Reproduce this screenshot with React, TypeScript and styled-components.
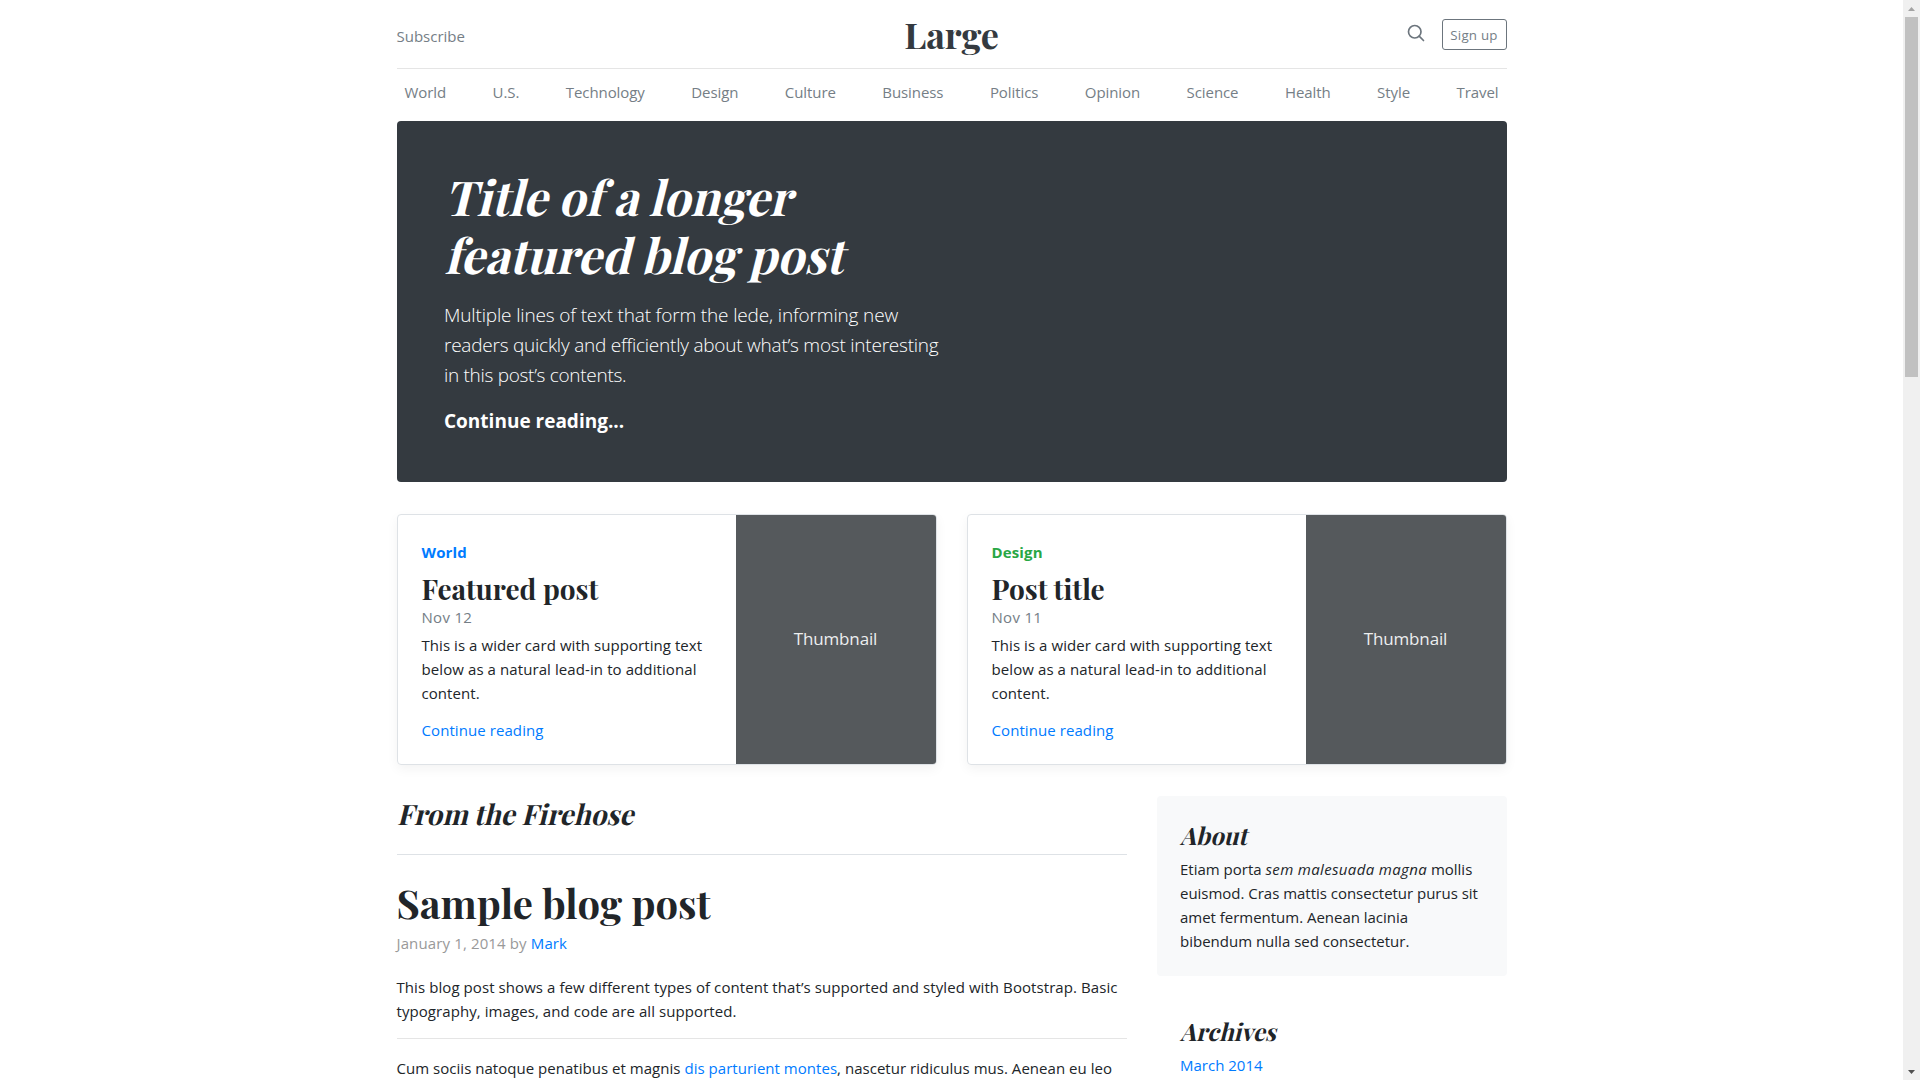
import React from "react";
import styled, { createGlobalStyle } from "styled-components";

const serif = `"Playfair Display", "Liberation Serif", Georgia, serif`;
const sans = `"Open Sans", "Noto Sans", sans-serif`;
const muted = "#757e86";

const GlobalStyle = createGlobalStyle`
  *, *::before, *::after { box-sizing: border-box; }
  html, body { margin: 0; padding: 0; background: #fff; overflow: hidden; }
  body { font: 400 15px/24px ${sans}; color: #212529; }
  h1, h2, h3, h4, p { margin: 0; }
`;

const Window = styled.div`
  display: flex;
  width: 1920px;
  height: 1080px;
  overflow: hidden;
`;

const Viewport = styled.div`
  flex: 1;
  height: 100%;
  overflow: hidden;
`;

const Container = styled.div`
  width: 1110px;
  margin: 0 auto;
`;

const Link = styled.a`
  color: #007bff;
  text-decoration: none;
`;

/* White-space is kept on one line so that copy breaks where it is authored. */
const Line = styled.span<{ $spacing?: number }>`
  display: block;
  white-space: nowrap;
  letter-spacing: ${(p) => p.$spacing ?? 0}px;
`;

/* Slants the upright serif around its baseline (line-height 1.2). */
const Oblique = styled.span`
  display: block;
  width: max-content;
  white-space: nowrap;
  transform: skewX(-14deg);
  transform-origin: 0 1.0155em;
`;

/* ---------- header ---------- */

const Header = styled.header`
  display: grid;
  grid-template-columns: 1fr auto 1fr;
  align-items: start;
  height: 69px;
  border-bottom: 1px solid #e5e5e5;
`;

const Subscribe = styled.a`
  margin-top: 24px;
  color: ${muted};
`;

const Brand = styled.a`
  margin-top: 12px;
  font: 700 36px/44px ${serif};
  letter-spacing: -0.1px;
  color: #343a40;
`;

const HeaderActions = styled.div`
  display: flex;
  justify-content: flex-end;
  gap: 16px;
  padding-top: 19px;
`;

const SearchIcon = styled.svg`
  width: 20px;
  height: 20px;
  margin-top: 4px;
  fill: none;
  stroke: #6c757d;
  stroke-width: 2;
  stroke-linecap: round;
  stroke-linejoin: round;
`;

const SignUp = styled.button`
  width: 65px;
  height: 31px;
  padding: 0;
  border: 1px solid #6c757d;
  border-radius: 3px;
  background: transparent;
  font: 400 13.3px/20px ${sans};
  letter-spacing: 0.25px;
  color: ${muted};
`;

const Nav = styled.nav`
  display: flex;
  justify-content: space-between;
  height: 52px;
  padding: 11px 0 0;
`;

const NavItem = styled.a`
  padding: 0 8px;
  letter-spacing: -0.08px;
  color: ${muted};
`;

/* ---------- featured ---------- */

const Jumbotron = styled.section`
  height: 361px;
  padding: 47px 48px 0 47.5px;
  border-radius: 4px;
  background: #343a40;
  color: #fff;
`;

const JumboTitle = styled.h1`
  font: 700 48px/1.2 ${serif};
`;

const Lead = styled.p`
  margin-top: 17px;
  font: 300 19px/30px ${sans};
`;

const LeadLink = styled.a`
  display: block;
  margin-top: 16px;
  font: 700 19px/30px ${sans};
  color: #fff;
`;

const Cards = styled.section`
  display: grid;
  grid-template-columns: 1fr 1fr;
  gap: 30px;
  margin-top: 32px;
`;

const Card = styled.article`
  display: flex;
  height: 251px;
  border: 1px solid #dee2e6;
  border-radius: 4px;
  overflow: hidden;
  box-shadow: 0 4px 12px rgba(0, 0, 0, 0.05);
`;

const CardBody = styled.div`
  flex: 1;
  padding: 25px 0 0 24px;
`;

const Category = styled.strong<{ $color: string }>`
  display: block;
  letter-spacing: 0.15px;
  color: ${(p) => p.$color};
`;

const CardTitle = styled.h3`
  margin: 8px 0 -1px;
  font: 700 28px/34px ${serif};
`;

const CardDate = styled.div`
  letter-spacing: 0.3px;
  color: ${muted};
`;

const CardText = styled.p`
  margin-top: 4px;
`;

const CardLink = styled(Link)`
  display: block;
  margin-top: 13px;
  letter-spacing: 0.08px;
`;

const Thumbnail = styled.div`
  display: flex;
  align-items: center;
  justify-content: center;
  width: 200px;
  padding-bottom: 1px;
  background: #55595c;
  color: #eceeef;
  font: 400 17px/24px ${sans};
  letter-spacing: -0.15px;
`;

/* ---------- content ---------- */

const Content = styled.div`
  display: grid;
  grid-template-columns: 730px 350px;
  gap: 30px;
  margin-top: 31px;
`;

const SectionTitle = styled.h3`
  height: 59px;
  padding-top: 1px;
  border-bottom: 1px solid #dee2e6;
  font: 700 28px/1.2 ${serif};
`;

const PostTitle = styled.h2`
  margin-top: 24px;
  font: 700 40px/48px ${serif};
`;

const PostMeta = styled.p`
  margin: 4px 0 20px;
  letter-spacing: 0.13px;
  color: #999;
`;

const Rule = styled.hr`
  margin: 15px 0 17px;
  border: 0;
  border-top: 1px solid #e5e5e5;
`;

const Widget = styled.section<{ $filled?: boolean }>`
  height: 180px;
  margin-bottom: 16px;
  padding: 25px 24px 0 23.5px;
  border-radius: 4px;
  background: ${(p) => (p.$filled ? "#f8f9fa" : "transparent")};
`;

const WidgetTitle = styled.h4`
  height: 36px;
  font: 700 24px/1.2 ${serif};
`;

const Emphasis = styled.em`
  letter-spacing: 0.35px;
`;

/* ---------- scrollbar ---------- */

const Scrollbar = styled.div`
  display: flex;
  flex-direction: column;
  align-items: center;
  width: 17px;
  height: 100%;
  background: #f0f0f0;
`;

const Arrow = styled.svg<{ $color: string }>`
  width: 17px;
  height: 17px;
  fill: ${(p) => p.$color};
`;

const Thumb = styled.div`
  width: 13px;
  height: 360px;
  margin-bottom: auto;
  background: #c1c1c1;
`;

const sections = [
  "World", "U.S.", "Technology", "Design", "Culture", "Business",
  "Politics", "Opinion", "Science", "Health", "Style", "Travel",
];

const posts = [
  { category: "World", color: "#007bff", title: "Featured post", date: "Nov 12" },
  { category: "Design", color: "#28a745", title: "Post title", date: "Nov 11" },
];

export default function App() {
  return (
    <Window>
      <GlobalStyle />
      <Viewport>
        <Container>
          <Header>
            <Subscribe>Subscribe</Subscribe>
            <Brand>Large</Brand>
            <HeaderActions>
              <SearchIcon viewBox="0 0 24 24">
                <circle cx="10.5" cy="10.5" r="7.5" />
                <path d="M21 21l-5.2-5.2" />
              </SearchIcon>
              <SignUp>Sign up</SignUp>
            </HeaderActions>
          </Header>
          <Nav>
            {sections.map((name) => (
              <NavItem key={name}>{name}</NavItem>
            ))}
          </Nav>

          <Jumbotron>
            <JumboTitle>
              <Oblique>Title of a longer</Oblique>
              <Oblique>featured blog post</Oblique>
            </JumboTitle>
            <Lead>
              <Line $spacing={-0.15}>Multiple lines of text that form the lede, informing new</Line>
              <Line $spacing={-0.23}>readers quickly and efficiently about what’s most interesting</Line>
              <Line $spacing={-0.3}>in this post’s contents.</Line>
            </Lead>
            <LeadLink>Continue reading...</LeadLink>
          </Jumbotron>

          <Cards>
            {posts.map((post) => (
              <Card key={post.title}>
                <CardBody>
                  <Category $color={post.color}>{post.category}</Category>
                  <CardTitle>{post.title}</CardTitle>
                  <CardDate>{post.date}</CardDate>
                  <CardText>
                    <Line $spacing={0.06}>This is a wider card with supporting text</Line>
                    <Line $spacing={0.09}>below as a natural lead-in to additional</Line>
                    <Line $spacing={0.06}>content.</Line>
                  </CardText>
                  <CardLink>Continue reading</CardLink>
                </CardBody>
                <Thumbnail>Thumbnail</Thumbnail>
              </Card>
            ))}
          </Cards>

          <Content>
            <main>
              <SectionTitle>
                <Oblique>From the Firehose</Oblique>
              </SectionTitle>
              <PostTitle>Sample blog post</PostTitle>
              <PostMeta>
                January 1, 2014 by <Link>Mark</Link>
              </PostMeta>
              <p>
                <Line $spacing={0.076}>
                  This blog post shows a few different types of content that’s supported and styled with Bootstrap. Basic
                </Line>
                <Line $spacing={0.076}>typography, images, and code are all supported.</Line>
              </p>
              <Rule />
              <p>
                <Line $spacing={0.03}>
                  Cum sociis natoque penatibus et magnis <Link>dis parturient montes</Link>, nascetur ridiculus mus. Aenean eu leo
                </Line>
              </p>
            </main>
            <aside>
              <Widget $filled>
                <WidgetTitle>
                  <Oblique>About</Oblique>
                </WidgetTitle>
                <Line>
                  Etiam porta <Emphasis>sem malesuada magna</Emphasis> mollis
                </Line>
                <Line $spacing={-0.02}>euismod. Cras mattis consectetur purus sit</Line>
                <Line $spacing={-0.02}>amet fermentum. Aenean lacinia</Line>
                <Line>bibendum nulla sed consectetur.</Line>
              </Widget>
              <Widget>
                <WidgetTitle>
                  <Oblique>Archives</Oblique>
                </WidgetTitle>
                <Link>March 2014</Link>
              </Widget>
            </aside>
          </Content>
        </Container>
      </Viewport>
      <Scrollbar>
        <Arrow $color="#a3a3a3" viewBox="0 0 17 17">
          <path d="M5 11L8.500 7L12 11Z" />
        </Arrow>
        <Thumb />
        <Arrow $color="#505050" viewBox="0 0 17 17">
          <path d="M5 7L8.500 11L12 7Z" />
        </Arrow>
      </Scrollbar>
    </Window>
  );
}
